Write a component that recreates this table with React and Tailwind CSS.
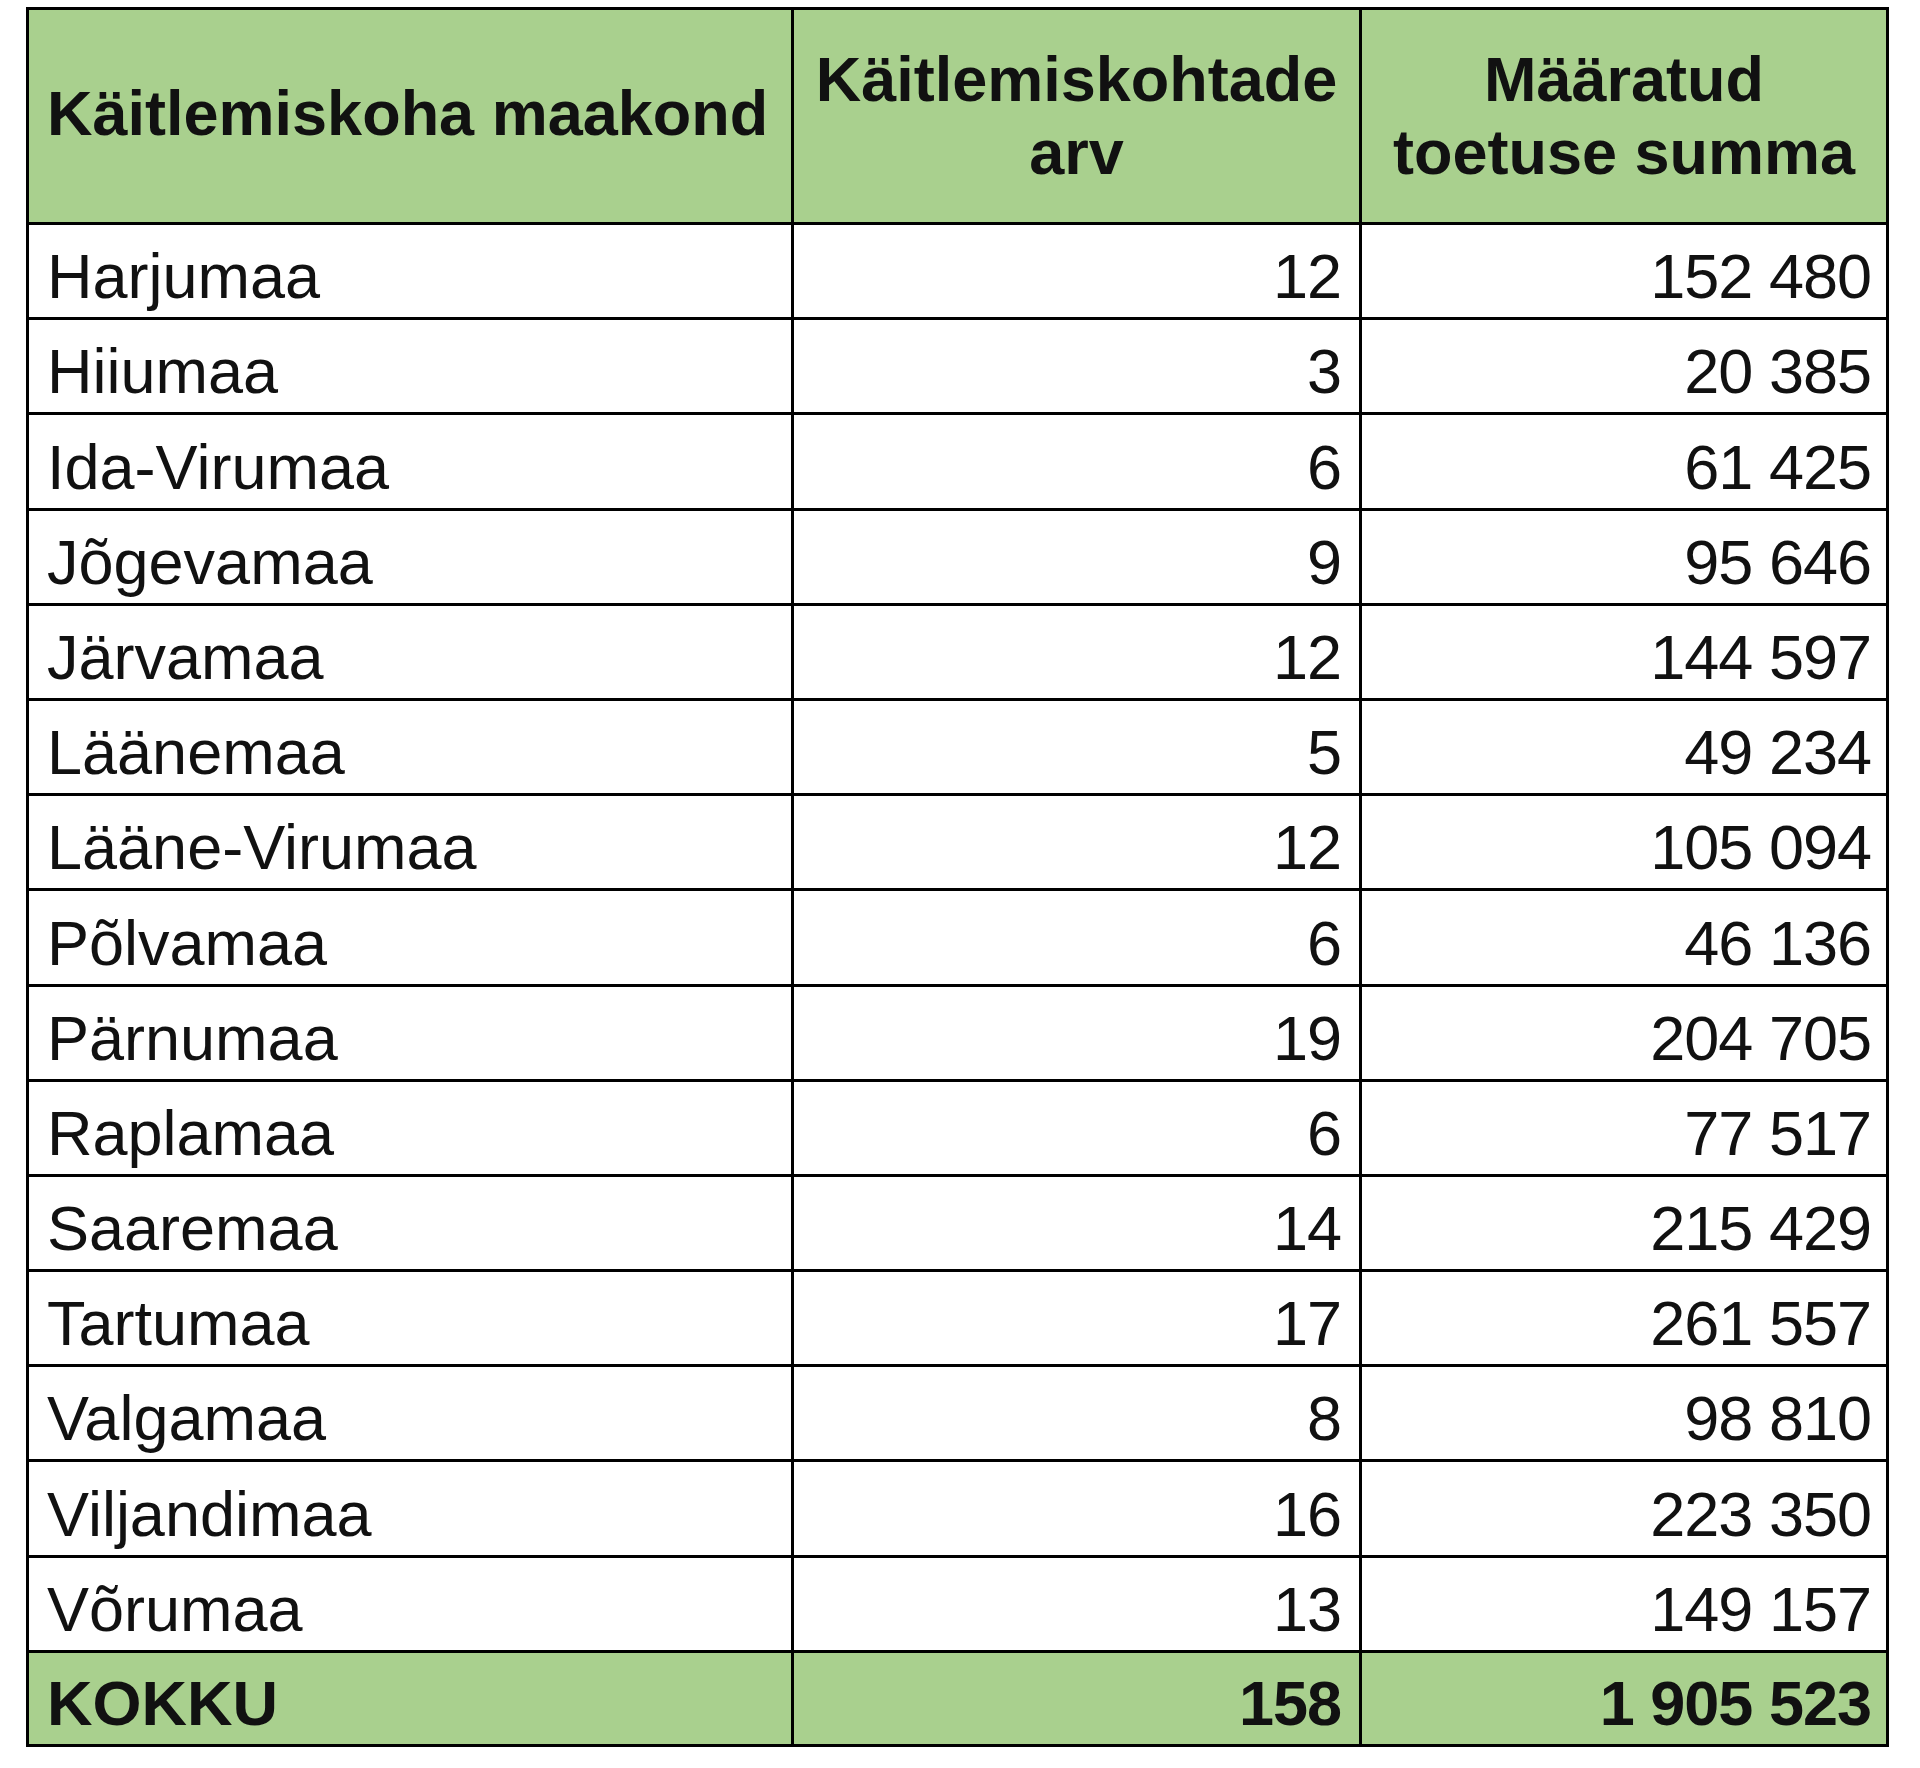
import React from "react";

const rows = [
  ["Harjumaa", "12", "152 480"],
  ["Hiiumaa", "3", "20 385"],
  ["Ida-Virumaa", "6", "61 425"],
  ["Jõgevamaa", "9", "95 646"],
  ["Järvamaa", "12", "144 597"],
  ["Läänemaa", "5", "49 234"],
  ["Lääne-Virumaa", "12", "105 094"],
  ["Põlvamaa", "6", "46 136"],
  ["Pärnumaa", "19", "204 705"],
  ["Raplamaa", "6", "77 517"],
  ["Saaremaa", "14", "215 429"],
  ["Tartumaa", "17", "261 557"],
  ["Valgamaa", "8", "98 810"],
  ["Viljandimaa", "16", "223 350"],
  ["Võrumaa", "13", "149 157"],
];

const App = () => {
  return (
    <div className="min-h-screen bg-white pl-[26px] pt-[7px] font-['Liberation_Sans',Arial,sans-serif] text-[63px] leading-[73px] text-[#111]">
      <table className="w-[1860px] table-fixed border-collapse border-[3px] border-black">
        <colgroup>
          <col className="w-[765px]" />
          <col className="w-[568px]" />
          <col className="w-[527px]" />
        </colgroup>
        <thead>
          {/* Header */}
          <tr className="h-[215px] bg-[#a9d08e] font-bold">
            <th className="border-[3px] border-black pb-[6px] pl-[18px] text-left align-middle font-bold">
              Käitlemiskoha maakond
            </th>
            <th className="border-[3px] border-black px-2 text-center align-middle font-bold">
              Käitlemiskohtade
              <br />
              arv
            </th>
            <th className="border-[3px] border-black px-2 text-center align-middle font-bold">
              Määratud
              <br />
              toetuse summa
            </th>
          </tr>
        </thead>
        <tbody>
          {rows.map(([county, count, sum]) => (
            <tr key={county} className="h-[95.2px]">
              <td className="border-[3px] border-black pb-1 pl-[18px] align-bottom">
                {county}
              </td>
              <td className="border-[3px] border-black pb-1 pr-[18px] text-right align-bottom tracking-[-1px]">
                {count}
              </td>
              <td className="border-[3px] border-black pb-1 pr-[15px] text-right align-bottom tracking-[-1px]">
                {sum}
              </td>
            </tr>
          ))}
          {/* Total */}
          <tr className="h-[94px] bg-[#a9d08e] font-bold">
            <td className="border-[3px] border-black pb-1 pl-[18px] align-bottom">
              KOKKU
            </td>
            <td className="border-[3px] border-black pb-1 pr-[18px] text-right align-bottom tracking-[-1px]">
              158
            </td>
            <td className="border-[3px] border-black pb-1 pr-[15px] text-right align-bottom tracking-[-1px]">
              1 905 523
            </td>
          </tr>
        </tbody>
      </table>
    </div>
  );
};

export default App;
